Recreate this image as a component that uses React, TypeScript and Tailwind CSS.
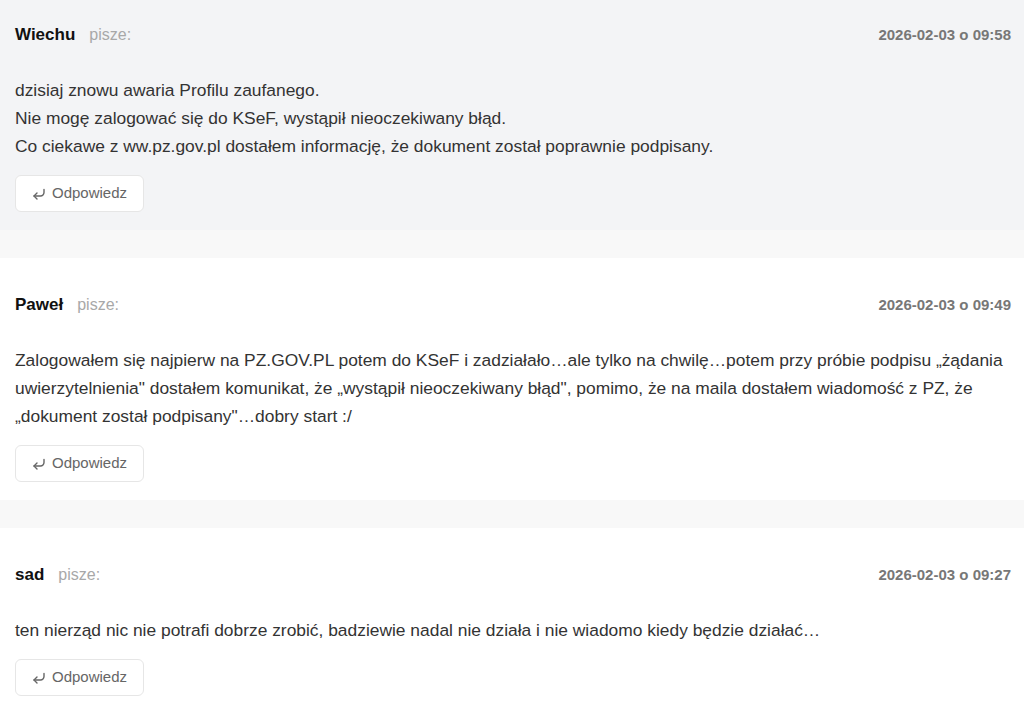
const comments = [
  {
    author: "Wiechu",
    date: "2026-02-03 o 09:58",
    highlighted: true,
    lines: [
      "dzisiaj znowu awaria Profilu zaufanego.",
      "Nie mogę zalogować się do KSeF, wystąpił nieoczekiwany błąd.",
      "Co ciekawe z ww.pz.gov.pl dostałem informację, że dokument został poprawnie podpisany.",
    ],
  },
  {
    author: "Paweł",
    date: "2026-02-03 o 09:49",
    highlighted: false,
    lines: [
      "Zalogowałem się najpierw na PZ.GOV.PL potem do KSeF i zadziałało…ale tylko na chwilę…potem przy próbie podpisu „żądania uwierzytelnienia\" dostałem komunikat, że „wystąpił nieoczekiwany błąd\", pomimo, że na maila dostałem wiadomość z PZ, że „dokument został podpisany\"…dobry start :/",
    ],
  },
  {
    author: "sad",
    date: "2026-02-03 o 09:27",
    highlighted: false,
    lines: [
      "ten nierząd nic nie potrafi dobrze zrobić, badziewie nadal nie działa i nie wiadomo kiedy będzie działać…",
    ],
  },
];

const ReplyIcon = () => (
  <svg width="14" height="12" viewBox="0 0 14 12" fill="none" stroke="currentColor" strokeWidth="1.4" strokeLinecap="round" strokeLinejoin="round">
    <path d="M12 1.5v3a3.5 3.5 0 0 1-3.5 3.5H2" />
    <path d="M5 5 2 8l3 3" />
  </svg>
);

const Comment = ({ c }: { c: (typeof comments)[number] }) => (
  <div className={`pl-[15px] pr-[13px] pt-[35px] pb-[18px] ${c.highlighted ? "bg-[#f3f4f6]" : "bg-white"}`}>
    <div className="flex items-center justify-between h-6">
      <div className="flex items-center gap-[14px]">
        <span className="text-[17px] font-bold text-[#111]">{c.author}</span>
        <span className="text-base text-[#a8a8a8]">pisze:</span>
      </div>
      <span className="text-[15px] font-bold text-[#777]">{c.date}</span>
    </div>
    <div className="mt-[29px] text-[17.4px] leading-7 text-[#333]">
      {c.lines.map((l, i) => (
        <p key={i}>{l}</p>
      ))}
    </div>
    <button className="mt-[15px] flex items-center gap-[6px] h-[37px] pl-[16px] pr-[16px] bg-white border border-[#e6e6e6] rounded-md text-[15px] text-[#666]">
      <ReplyIcon />
      <span>Odpowiedz</span>
    </button>
  </div>
);

export default function App() {
  return (
    <div className="min-h-screen bg-[#f8f8f8] overflow-hidden" style={{ fontFamily: '"Liberation Sans", Arial, sans-serif' }}>
      <div className="-mt-3 flex flex-col gap-7">
        {comments.map((c) => (
          <Comment key={c.author} c={c} />
        ))}
      </div>
    </div>
  );
}
